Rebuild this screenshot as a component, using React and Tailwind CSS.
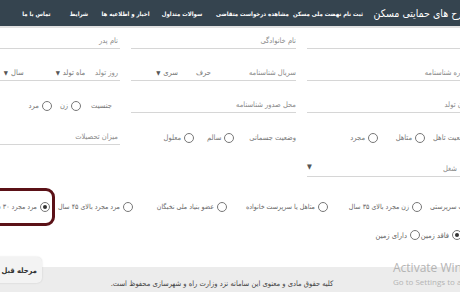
import React from "react";

function Radio({ checked }) {
  return (
    <span className="w-[10px] h-[10px] rounded-full border border-[#777] bg-white flex items-center justify-center shrink-0">
      {checked && <span className="w-[4px] h-[4px] rounded-full bg-[#333]" />}
    </span>
  );
}

function Opt({ label, checked, className = "" }) {
  return (
    <span className={"flex items-center gap-[3px] shrink-0 whitespace-nowrap " + className}>
      <Radio checked={checked} />
      <span>{label}</span>
    </span>
  );
}

function Field({ children, line = true }) {
  return (
    <div
      className={
        "h-[20px] flex items-end pb-[2px] text-[7.5px] leading-[11px] text-[#8a8a8a] whitespace-nowrap " +
        (line ? "border-b border-[#d6d6d6]" : "")
      }
    >
      {children}
    </div>
  );
}

function Arrow() {
  return <span className="text-[6px] text-[#555] mr-[3px]">▼</span>;
}

export default function App() {
  return (
    <div
      dir="rtl"
      className="relative w-[460px] h-[292px] overflow-hidden bg-white font-['DejaVu_Sans_Condensed','DejaVu_Sans',sans-serif]"
    >
      {/* header */}
      <div className="h-[26px] bg-[#35444f] border-b-[2px] border-[#e2e2e2] box-content">
        <div className="mr-[-10px] h-full flex items-center text-white">
          <div className="w-[105px] shrink-0 text-[10.5px] leading-[14px] whitespace-nowrap">طرح های حمایتی مسکن</div>
          <div className="w-[74px] shrink-0 flex justify-center text-[6px] font-bold whitespace-nowrap">ثبت نام نهضت ملی مسکن</div>
          <div className="w-[77px] shrink-0 flex justify-center text-[6px] font-bold whitespace-nowrap">مشاهده درخواست متقاضی</div>
          <div className="w-[64px] shrink-0 flex justify-center text-[6px] font-bold whitespace-nowrap">سوالات متداول</div>
          <div className="w-[49px] shrink-0 flex justify-center text-[6px] font-bold whitespace-nowrap">اخبار و اطلاعیه ها</div>
          <div className="w-[44px] shrink-0 flex justify-center text-[6px] font-bold whitespace-nowrap">شرایط</div>
          <div className="w-[41px] shrink-0 flex justify-center text-[6px] font-bold whitespace-nowrap">تماس با ما</div>
        </div>
      </div>

      {/* form */}
      <div className="w-[517px] mr-[-12px] pt-[1px]">
        <div className="grid grid-cols-[165px_165px_165px] gap-x-[11px] gap-y-[12px]">
          {/* row 1 */}
          <Field>نام</Field>
          <Field>نام خانوادگی</Field>
          <Field>
            <span className="mr-[2px]">نام پدر</span>
          </Field>

          {/* row 2 */}
          <Field>شماره شناسنامه</Field>
          <Field>
            <span>سریال شناسنامه</span>
            <span className="mr-[38px] text-[#777]">حرف</span>
            <span className="mr-[18px] flex items-center text-[#777]">
              سری
              <Arrow />
            </span>
          </Field>
          <Field>
            <span className="mr-[2px]">روز تولد</span>
            <span className="mr-[10px] flex items-center text-[#777]">
              ماه تولد
              <Arrow />
            </span>
            <span className="mr-[32px] flex items-center text-[#777]">
              سال
              <Arrow />
            </span>
          </Field>

          {/* row 3 */}
          <Field>مکان تولد</Field>
          <Field>محل صدور شناسنامه</Field>
          <Field line={false}>
            <div className="flex items-center text-[#777]">
              <span className="mr-[8px]">جنسیت</span>
              <Opt label="زن" className="mr-[10px]" />
              <Opt label="مرد" className="mr-[8px]" />
            </div>
          </Field>

          {/* row 4 */}
          <Field line={false}>
            <div className="flex items-center text-[#777]">
              <div className="w-[39px] shrink-0 flex justify-end">
                <span className="shrink-0">وضعیت تاهل</span>
              </div>
              <Opt label="متاهل" className="w-[47px] mr-[8px]" />
              <Opt label="مجرد" />
            </div>
          </Field>
          <Field line={false}>
            <div className="flex items-center text-[#777]">
              <span>وضعیت جسمانی</span>
              <Opt label="سالم" className="mr-[15px]" />
              <Opt label="معلول" className="mr-[13px]" />
            </div>
          </Field>
          <Field>
            <span className="mr-[2px]">میزان تحصیلات</span>
          </Field>

          {/* row 5 */}
          <Field>
            <span className="mr-[15px] flex-1">شغل</span>
            <span className="text-[7px] text-[#555] mb-[1px]">▼</span>
          </Field>
          <div />
          <div />
        </div>

        {/* row 6 */}
        <div className="mt-[11px] h-[38px] flex items-center text-[7px] leading-[11px] text-[#666]">
          <div className="w-[42px] shrink-0 flex justify-end">
            <span className="shrink-0 whitespace-nowrap">اطلاعات سرپرستی</span>
          </div>
          <Opt label="زن مجرد بالای ۳۵ سال" className="w-[94px] mr-[8px]" />
          <Opt label="متاهل یا سرپرست خانواده" className="w-[101px]" />
          <Opt label="عضو بنیاد ملی نخبگان" className="w-[94px]" />
          <Opt label="مرد مجرد بالای ۴۵ سال" className="w-[78px]" />
          <div className="h-[38px] w-[110px] shrink-0 border-[3px] border-[#5b1117] rounded-[9px] flex items-center pr-[2px]">
            <Opt label="مرد مجرد ۳۰ سال" checked />
          </div>
        </div>

        {/* row 7 */}
        <div className="h-[18px] flex items-center text-[7.5px] leading-[11px] text-[#666] pr-[10px]">
          <Opt label="فاقد زمین" checked className="w-[42px]" />
          <Opt label="دارای زمین" />
        </div>

        {/* button */}
        <div className="mt-[13px] flex justify-end">
          <div className="relative z-10 w-[70px] ml-[17px] h-[26px] rounded-[5px] bg-[#f3f3f3] shadow-[0_0_2px_rgba(0,0,0,0.15)] flex items-center pr-[5px] text-[7.5px] leading-[11px] font-bold text-[#333] whitespace-nowrap">
            مرحله قبل
          </div>
        </div>
      </div>

      {/* footer */}
      <div className="absolute bottom-0 left-0 right-0 h-[25px] bg-[#ececec] flex items-end justify-center pb-[3px] pr-[16px] text-[7.5px] leading-[11px] text-[#444] whitespace-nowrap">
        کلیه حقوق مادی و معنوی این سامانه نزد وزارت راه و شهرسازی محفوظ است.
      </div>

      {/* activate windows watermark */}
      <div
        dir="ltr"
        className="absolute left-[393px] top-[261px] pointer-events-none whitespace-nowrap font-['Open_Sans',sans-serif] text-[#b4b4b4]"
      >
        <div className="text-[12px] leading-[14px]">Activate Windows</div>
        <div className="text-[8px] leading-[10px] mt-[2px]">Go to Settings to activate Windows.</div>
      </div>
    </div>
  );
}
